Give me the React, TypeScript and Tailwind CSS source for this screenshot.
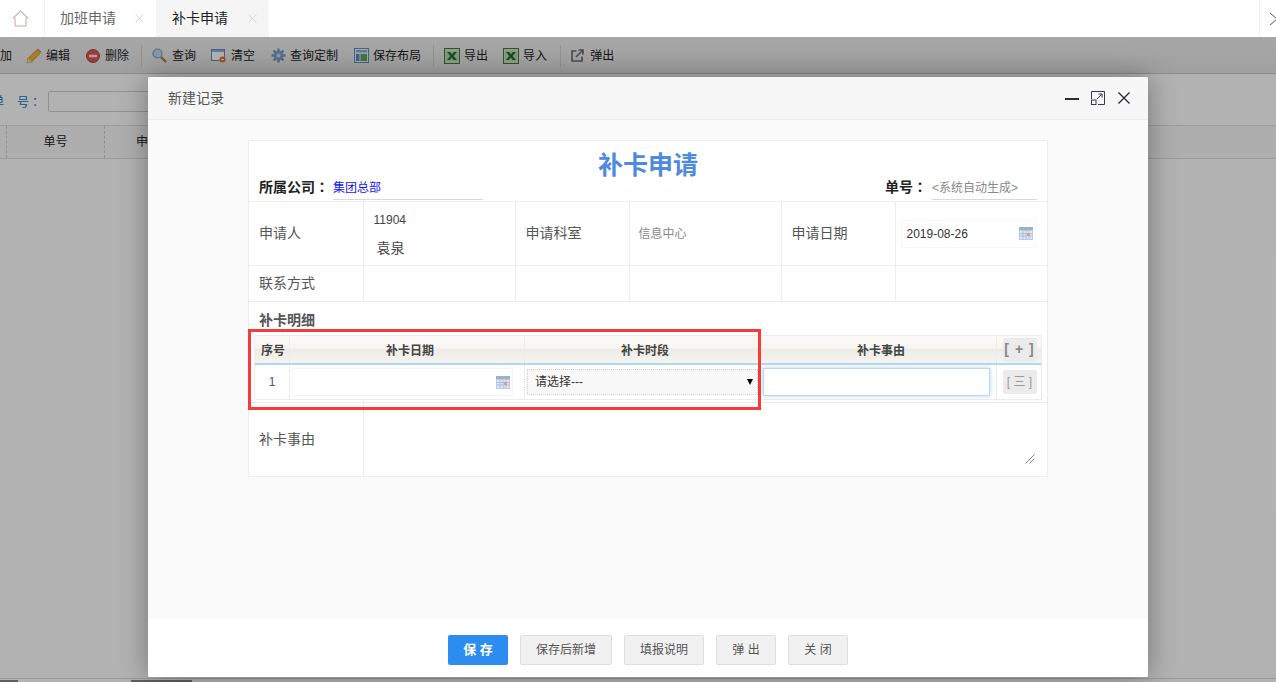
import React from "react";

const FONT = { fontFamily: '"Liberation Sans","Noto Sans CJK SC",sans-serif' };

function Calendar() {
  return (
    <svg width="14" height="13" viewBox="0 0 14 13" className="block">
      <rect x="0" y="0" width="14" height="13" fill="#b9cbe3" />
      <rect x="0" y="0" width="14" height="3" fill="#9fb0c6" />
      <rect x="1" y="4" width="12" height="8" fill="#dfe8f5" />
      <path d="M1 6.5h12M1 9h12M4 4v8M7 4v8M10 4v8" stroke="#a9bfdd" strokeWidth="1" />
      <rect x="8" y="6" width="3" height="3" fill="#ef9a80" />
    </svg>
  );
}

function Excel() {
  return (
    <svg width="16" height="16" viewBox="0 0 16 16" className="block">
      <rect x="0.5" y="0.5" width="15" height="15" fill="#cfe3c9" stroke="#3f7c3c" />
      <rect x="2" y="3" width="12" height="10" fill="#bcd9b4" />
      <path d="M3 4l3.2 4L3 12h2.8l1.9-2.4L9.6 12H13L9.6 8 13 4H9.9L8 6.3 6 4z" fill="#23702c" />
    </svg>
  );
}

function Tool({ icon, label, cls }: { icon: React.ReactNode; label: string; cls: string }) {
  return (
    <div className={`flex items-center shrink-0 ${cls}`}>
      {icon}
      <span className="text-[12px] text-[#222]">{label}</span>
    </div>
  );
}

function Sep({ cls }: { cls: string }) {
  return <div className={`w-px h-[22px] bg-[#d2d2d2] shrink-0 ${cls}`} />;
}

function Toolbar() {
  return (
    <div className="h-[37px] flex items-center shrink-0 pt-[1px] bg-gradient-to-b from-[#f0f0f0] to-[#e6e6e6] border-b border-[#c8c8c8] overflow-hidden">
      <span className="text-[12px] text-[#222] w-[12px] overflow-hidden shrink-0 flex justify-end">加</span>
      <Tool
        cls="ml-[14px] gap-[4px]"
        label="编辑"
        icon={
          <svg width="16" height="16" viewBox="0 0 16 16">
            <path d="M1 15l1-4.5L11 1.5l3.5 3.5-9 9z" fill="#f0b43c" stroke="#a8741c" strokeWidth="0.7" />
            <path d="M11 1.5l1.2-1 3 3-0.7 1.5z" fill="#d98a9a" />
            <path d="M1 15l1-4.5 3.5 3.5z" fill="#f4dcae" />
          </svg>
        }
      />
      <Tool
        cls="ml-[16px] gap-[5px]"
        label="删除"
        icon={
          <svg width="14" height="14" viewBox="0 0 14 14">
            <circle cx="7" cy="7" r="6.5" fill="#d8574f" stroke="#b8433c" />
            <rect x="3" y="5.7" width="8" height="2.6" fill="#f6e3e1" />
          </svg>
        }
      />
      <Sep cls="ml-[12px]" />
      <Tool
        cls="ml-[10px] gap-[5px]"
        label="查询"
        icon={
          <svg width="15" height="15" viewBox="0 0 15 15">
            <circle cx="5.5" cy="5.5" r="4.5" fill="#c4d9f1" stroke="#7f9fc8" strokeWidth="1.2" />
            <path d="M9 9l5 5" stroke="#a4803f" strokeWidth="2.2" />
          </svg>
        }
      />
      <Tool
        cls="ml-[15px] gap-[5px]"
        label="清空"
        icon={
          <svg width="15" height="15" viewBox="0 0 15 15">
            <rect x="0.5" y="1.5" width="13" height="11" fill="#fff" stroke="#6a8cc0" />
            <rect x="1" y="2" width="12" height="2" fill="#8fb0dc" />
            <circle cx="11.5" cy="11.5" r="3" fill="#e0752c" />
            <rect x="10" y="11" width="3" height="1" fill="#fff" />
          </svg>
        }
      />
      <Tool
        cls="ml-[16px] gap-[4px]"
        label="查询定制"
        icon={
          <svg width="15" height="15" viewBox="0 0 15 15">
            <g stroke="#6f95bf" strokeWidth="2.4">
              <path d="M7.5 0.5v14M0.5 7.5h14M2.6 2.6l9.8 9.8M12.4 2.6l-9.8 9.8" />
            </g>
            <circle cx="7.5" cy="7.5" r="4.8" fill="#7ea3cb" />
            <circle cx="7.5" cy="7.5" r="2" fill="#c9d9ea" />
          </svg>
        }
      />
      <Tool
        cls="ml-[16px] gap-[4px]"
        label="保存布局"
        icon={
          <svg width="15" height="15" viewBox="0 0 15 15">
            <rect x="0.5" y="0.5" width="14" height="14" fill="#e9f0f8" stroke="#6a8cc0" />
            <rect x="2" y="2" width="11" height="2.5" fill="#8fb0dc" />
            <rect x="2" y="6" width="3.5" height="7" fill="#5c8fc8" />
            <rect x="6.5" y="6" width="6.5" height="7" fill="#5eaa60" />
          </svg>
        }
      />
      <Sep cls="ml-[12px]" />
      <Tool cls="ml-[10px] gap-[4px]" label="导出" icon={<Excel />} />
      <Tool cls="ml-[15px] gap-[4px]" label="导入" icon={<Excel />} />
      <Sep cls="ml-[13px]" />
      <Tool
        cls="ml-[10px] gap-[6px]"
        label="弹出"
        icon={
          <svg width="13" height="13" viewBox="0 0 13 13" fill="none" stroke="#6a6a6a" strokeWidth="1.6">
            <path d="M5.5 2H1v10h10V7.5" />
            <path d="M5 8l6.5-6.5M7.5 1h4.5v4.5" />
          </svg>
        }
      />
    </div>
  );
}

function Background() {
  return (
    <div className="flex-1 flex flex-col bg-white min-h-0">
      <Toolbar />
      <div className="h-[52px] flex items-center shrink-0 border-b border-[#e0e0e0] pt-[4px] overflow-hidden">
        <span className="text-[12px] text-[#0a7ec2] ml-[-8px] w-[25px] shrink-0">单</span>
        <span className="text-[12px] text-[#0a7ec2] w-[31px] shrink-0 font-['Noto_Sans_CJK_TC']">号：</span>
        <div className="w-[160px] h-[21px] border border-[#cfcfcf] rounded-[2px] shrink-0" />
      </div>
      <div className="h-[33px] flex items-center shrink-0 border-b border-[#e0e0e0] bg-[#fafafa] text-[12px] text-[#222]">
        <div className="w-[7px] h-full border-r border-dashed border-[#cfcfcf] shrink-0" />
        <div className="w-[98px] h-full flex items-center justify-center border-r border-dashed border-[#cfcfcf] shrink-0">单号</div>
        <div className="w-[98px] h-full flex items-center justify-center shrink-0">申请人</div>
      </div>
      <div className="flex-1" />
      <div className="h-[4px] border-t border-[#d8d8d8] shrink-0 relative">
        <div className="absolute left-0 bottom-0 w-[18px] h-[2px] bg-[#888]" />
        <div className="absolute left-[131px] bottom-0 w-[61px] h-[2px] bg-[#888]" />
      </div>
    </div>
  );
}

function Btn({ label, cls, primary }: { label: string; cls: string; primary?: boolean }) {
  return (
    <div
      className={`h-[30px] flex items-center justify-center rounded-[2px] text-[12px] ${cls} ${
        primary ? "bg-[#2d8cf0] text-white font-bold text-[13px]" : "bg-[#f1f1f1] border border-[#dedede] text-[#555]"
      }`}
    >
      {label}
    </div>
  );
}

const cell = "border border-[#ececec] align-middle p-0";

function DetailTable() {
  const head =
    "bg-[linear-gradient(to_bottom,#fbfaf8_0%,#f6f5f2_45%,#ecebe5_50%,#f5f4f0_100%)] text-[12px] font-bold text-[#444] text-center";
  return (
    <div className="mx-[5px] border border-[#ececec] h-[65px] flex flex-col text-[12px]">
      <div className={`h-[29px] flex shrink-0 border-b-2 border-[#b0d8f5] ${head}`}>
        <div className="w-[35px] flex items-center justify-center border-r border-[#ececec] shrink-0 pt-[2px] pl-[2px]">序号</div>
        <div className="w-[235px] flex items-center justify-center border-r border-[#ececec] shrink-0 pt-[2px] pl-[6px]">补卡日期</div>
        <div className="w-[236px] flex items-center justify-center shrink-0 pt-[2px] pl-[4px]">补卡时段</div>
        <div className="flex-1 flex items-center justify-center border-r border-[#ececec] pt-[2px] pl-[5px]">补卡事由</div>
        <div className="w-[44px] flex items-center justify-center shrink-0 pl-[1px]">
          <div className="w-[34px] h-[24px] bg-[#ebebeb] rounded-[2px] flex items-center justify-center text-[14px] text-[#888] tracking-[1px]">[ + ]</div>
        </div>
      </div>
      <div className="flex-1 flex min-h-0">
        <div className="w-[35px] flex items-center justify-center border-r border-[#ececec] shrink-0 text-[#555]">1</div>
        <div className="w-[235px] flex items-center pl-[2px] border-r border-[#ececec] shrink-0">
          <div className="w-[221px] h-[28px] border border-[#f5f5f5] flex items-center justify-end pr-[2px]">
            <Calendar />
          </div>
        </div>
        <div className="w-[236px] flex items-center pl-[2px] shrink-0">
          <div className="w-[231px] h-[26px] bg-[#f8f8f8] border border-dotted border-[#cfcfcf] flex items-center justify-between pl-[7px] pr-[4px] text-[#333]">
            <span>请选择---</span>
            <span className="w-0 h-0 border-x-[3.5px] border-x-transparent border-t-[6px] border-t-black" />
          </div>
        </div>
        <div className="flex-1 flex items-center pl-[2px] pr-[6px] border-r border-[#ececec]">
          <div className="w-full h-[28px] bg-white border border-[#bcd8ef] shadow-[0_0_4px_rgba(120,180,230,0.6)]" />
        </div>
        <div className="w-[44px] flex items-center justify-center shrink-0 pl-[1px]">
          <div className="w-[34px] h-[24px] bg-[#ebebeb] rounded-[2px] flex items-center justify-center text-[12px] text-[#999]">[ 三 ]</div>
        </div>
      </div>
    </div>
  );
}

function Form() {
  return (
    <div className="w-[800px] h-[337px] bg-white border border-[#ececec] flex flex-col mx-auto shrink-0">
      <div className="h-[60px] relative shrink-0">
        <div className="text-center text-[25px] font-bold text-[#4d8ae0] leading-[28px] pt-[10px]">补卡申请</div>
        <div className="absolute left-[10px] bottom-[1px] flex items-end">
          <span className="text-[14px] font-bold text-[#222] w-[74px] leading-[20px] pb-[3px]">
            所属公司<span className="font-['Noto_Sans_CJK_TC']">：</span>
          </span>
          <span className="w-[150px] h-[23px] border-b border-[#d8d8d8] text-[12px] text-[#1414ff] leading-[22px]">集团总部</span>
        </div>
        <div className="absolute right-[10px] bottom-[1px] flex items-end">
          <span className="text-[14px] font-bold text-[#222] w-[47px] leading-[20px] pb-[3px]">
            单号<span className="font-['Noto_Sans_CJK_TC']">：</span>
          </span>
          <span className="w-[105px] h-[23px] border-b border-[#d8d8d8] text-[12px] text-[#888] leading-[22px]">&lt;系统自动生成&gt;</span>
        </div>
      </div>
      <table className="w-full table-fixed border-collapse shrink-0 text-[14px] text-[#555]">
        <colgroup>
          <col className="w-[114px]" />
          <col className="w-[152px]" />
          <col className="w-[114px]" />
          <col className="w-[152px]" />
          <col className="w-[114px]" />
          <col />
        </colgroup>
        <tbody>
          <tr className="h-[64px]">
            <td className={`${cell} border-l-0 pl-[10px]`}>申请人</td>
            <td className={cell}>
              <div className="pl-[10px] pt-[1px] text-[12px] text-[#444] leading-[18px]">11904</div>
              <div className="pl-[13px] mt-[10px] text-[#444] leading-[18px]">袁泉</div>
            </td>
            <td className={`${cell} pl-[10px]`}>申请科室</td>
            <td className={`${cell} pl-[9px] text-[12px] text-[#888]`}>信息中心</td>
            <td className={`${cell} pl-[10px]`}>申请日期</td>
            <td className={`${cell} border-r-0`}>
              <div className="ml-[5px] w-[135px] h-[28px] border border-[#f7f7f7] flex items-center justify-between pl-[5px] pr-[2px] text-[12px] text-[#333]">
                <span>2019-08-26</span>
                <Calendar />
              </div>
            </td>
          </tr>
          <tr className="h-[36px]">
            <td className={`${cell} border-l-0 pl-[10px]`}>联系方式</td>
            <td className={cell} />
            <td className={cell} />
            <td className={cell} />
            <td className={cell} />
            <td className={`${cell} border-r-0`} />
          </tr>
        </tbody>
      </table>
      <div className="h-[101px] flex flex-col justify-start shrink-0 border-b border-[#ececec]">
        <div className="h-[33px] flex items-start pl-[10px] pt-[7px] text-[14px] font-bold text-[#555] leading-[22px] shrink-0">补卡明细</div>
        <DetailTable />
      </div>
      <div className="flex-1 flex text-[14px] text-[#555] min-h-0">
        <div className="w-[115px] border-r border-[#ececec] flex items-center pl-[10px] shrink-0">补卡事由</div>
        <div className="flex-1 relative">
          <svg width="10" height="10" viewBox="0 0 10 10" className="absolute right-[12px] bottom-[12px]" stroke="#666" strokeWidth="0.8">
            <path d="M0.5 9.5l9-9M4.5 9.5l5-5" />
          </svg>
        </div>
      </div>
    </div>
  );
}

function Modal() {
  return (
    <div className="absolute left-[148px] top-[40px] w-[1000px] h-[600px] bg-white rounded-[2px] flex flex-col shadow-[0_0_28px_rgba(0,0,0,0.35)] overflow-hidden">
      <div className="h-[43px] bg-[#f7f7f7] border-b border-[#ececec] flex items-center pl-[20px] shrink-0">
        <span className="text-[14px] text-[#555] flex-1">新建记录</span>
        <svg width="14" height="14" viewBox="0 0 14 14" className="mr-[12px]" stroke="#2c2c38" strokeWidth="2">
          <path d="M0 8h14" />
        </svg>
        <svg width="14" height="14" viewBox="0 0 14 14" className="mr-[12px]" fill="none" stroke="#3a3a46" strokeWidth="1">
          <path d="M0.5 8V0.5h13v13H7" />
          <rect x="0.5" y="9" width="4.5" height="4.5" />
          <path d="M6 8l4.5-4.5M7.5 3H11v3.5" />
        </svg>
        <svg width="14" height="14" viewBox="0 0 14 14" className="mr-[17px]" stroke="#2c2c38" strokeWidth="1.4">
          <path d="M1.5 1.5l11 11M12.5 1.5l-11 11" />
        </svg>
      </div>
      <div className="flex-1 bg-[#fafafa] pt-[20px] min-h-0">
        <Form />
      </div>
      <div className="h-[58px] bg-white flex items-start justify-center gap-[12px] pt-[16px] shrink-0">
        <Btn primary cls="w-[60px]" label="保 存" />
        <Btn cls="w-[92px]" label="保存后新增" />
        <Btn cls="w-[80px]" label="填报说明" />
        <Btn cls="w-[60px]" label="弹 出" />
        <Btn cls="w-[60px]" label="关 闭" />
      </div>
    </div>
  );
}

function TabClose() {
  return (
    <svg width="9" height="9" viewBox="0 0 9 9" stroke="#d8d8d8" strokeWidth="1" className="mr-[12px] shrink-0">
      <path d="M0.5 0.5l8 8M8.5 0.5l-8 8" />
    </svg>
  );
}

export default function App() {
  return (
    <div className="w-[1276px] h-[682px] flex flex-col overflow-hidden bg-white" style={FONT}>
      <div className="h-[37px] flex bg-white shrink-0">
        <div className="w-[45px] flex items-center justify-center border-r border-[#f2f2f2] shrink-0 pr-[3px]">
          <svg width="17" height="17" viewBox="0 0 17 17" fill="none" stroke="#8a8f99" strokeWidth="1">
            <path d="M0.8 8.5L8.5 1l7.7 7.5" />
            <path d="M3 7.5v8.5h11V7.5" stroke="#c8a8a0" />
          </svg>
        </div>
        <div className="w-[111px] flex items-center pl-[15px] shrink-0 text-[14px] text-[#666]">
          <span className="flex-1">加班申请</span>
          <TabClose />
        </div>
        <div className="w-[113px] flex items-center pl-[16px] shrink-0 bg-[#f5f5f5] text-[14px] text-[#222]">
          <span className="flex-1">补卡申请</span>
          <TabClose />
        </div>
        <div className="flex-1" />
        <div className="w-[17px] border-l border-[#f2f2f2] flex items-center pl-[9px] shrink-0 overflow-hidden">
          <svg width="12" height="14" viewBox="0 0 12 14" fill="none" stroke="#555" strokeWidth="1" className="shrink-0">
            <path d="M1 1l7 6-7 6" />
          </svg>
        </div>
      </div>
      <div className="flex-1 relative flex flex-col min-h-0">
        <Background />
        <div className="absolute inset-0 bg-black/30" />
        <Modal />
        <div className="absolute left-[248px] top-[292px] w-[513px] h-[81px] border-[3px] border-[#f83a3a]" />
      </div>
    </div>
  );
}
